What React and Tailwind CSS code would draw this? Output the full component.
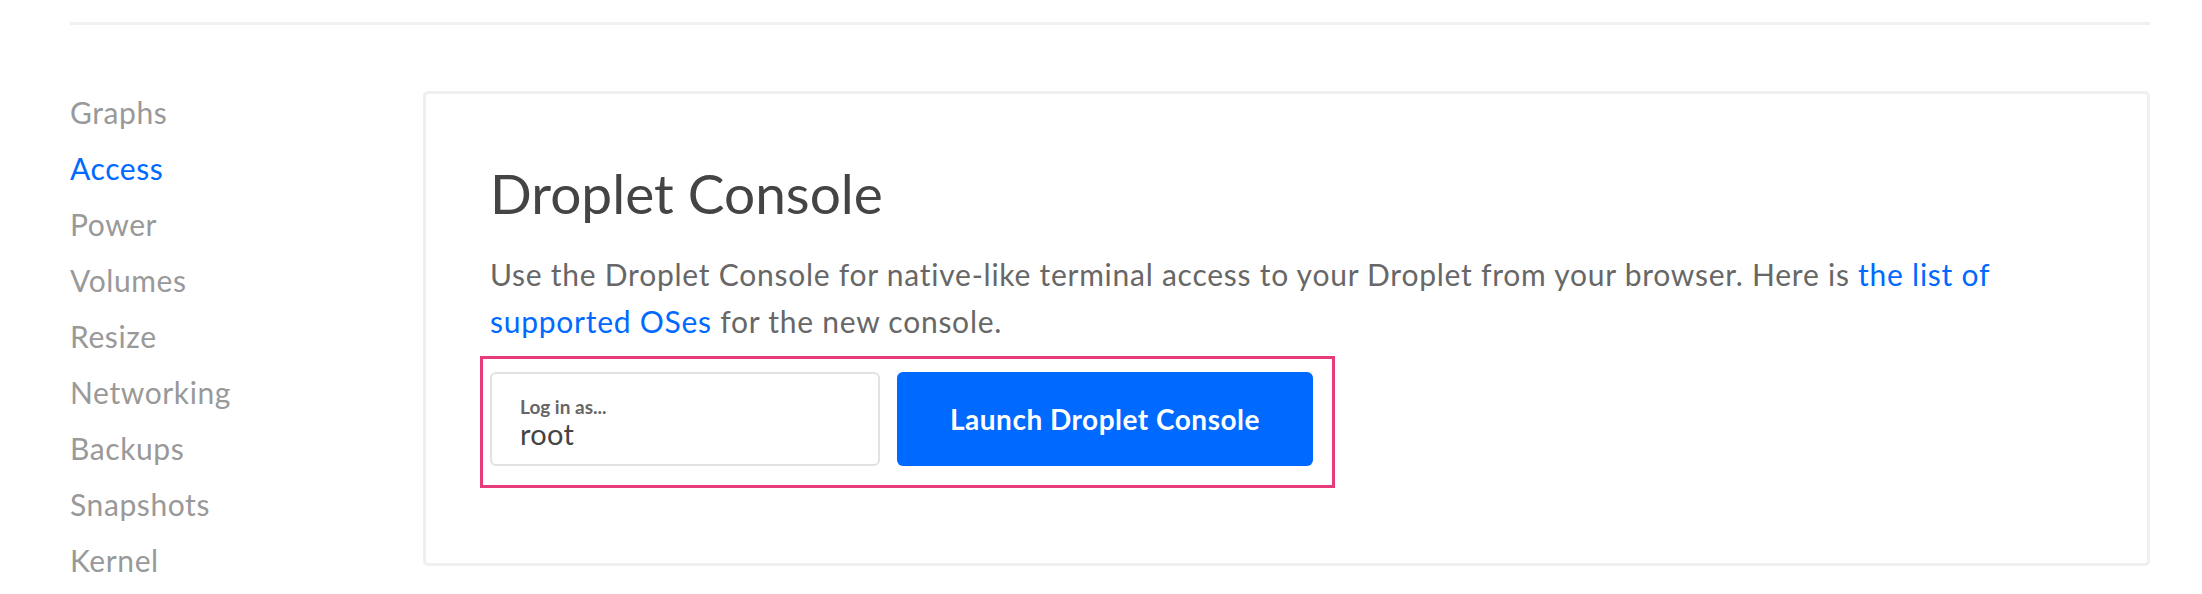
import React from 'react'

// Droplet settings sections
const sections = [
  'Graphs',
  'Access',
  'Power',
  'Volumes',
  'Resize',
  'Networking',
  'Backups',
  'Snapshots',
  'Kernel',
]

const App = () => {
  const active = 'Access'

  return (
    <div className="min-h-[594px] bg-white pl-[70px] pr-[52px] pt-[22px] font-['Lato','Open_Sans',sans-serif]">
      {/* Top divider */}
      <div className="h-[3px] w-[2080px] bg-[#f0f0f0]" />

      <div className="mt-[59px] flex">
        {/* Sidebar nav */}
        <nav className="flex w-[353px] shrink-0 flex-col">
          {sections.map((name) => (
            <a
              key={name}
              href="#"
              className={`text-[30px] leading-[56px] tracking-[0.6px] ${
                name === active ? 'text-[#0069ff]' : 'text-[#999999]'
              }`}
            >
              {name}
            </a>
          ))}
        </nav>

        {/* Console card */}
        <div className="mt-[7px] h-[475px] w-[1727px] shrink-0 rounded-[5px] border-[3px] border-[#efefef] pl-[64px] pr-[64px] pt-[66px]">
          <h1 className="text-[55px] font-normal leading-[67px] text-[#444444]">Droplet Console</h1>
          <p className="mt-[24px] text-[30px] leading-[47px] tracking-[0.75px] text-[#676767]">
            Use the Droplet Console for native-like terminal access to your Droplet from your browser. Here is{' '}
            <a href="#" className="text-[#0069ff]">
              the list of supported OSes
            </a>{' '}
            for the new console.
          </p>

          {/* Highlighted login group */}
          <div className="-ml-[10px] mt-[11px] flex w-fit gap-[17px] border-[3px] border-[#e63c7b] pb-[19px] pl-[7px] pr-[19px] pt-[13px]">
            <label className="flex h-[94px] w-[390px] flex-col justify-center rounded-[6px] border-2 border-[#e2e2e2] pl-[28px] pt-[8px]">
              <span className="text-[19px] font-bold leading-[22px] text-[#666666]">Log in as...</span>
              <span className="text-[29px] leading-[32px] tracking-[0.3px] text-[#444444]">root</span>
            </label>
            <button className="h-[94px] w-[416px] rounded-[6px] bg-[#0069ff] text-[28px] font-bold tracking-[0.5px] text-white">
              Launch Droplet Console
            </button>
          </div>
        </div>
      </div>
    </div>
  )
}

export default App
